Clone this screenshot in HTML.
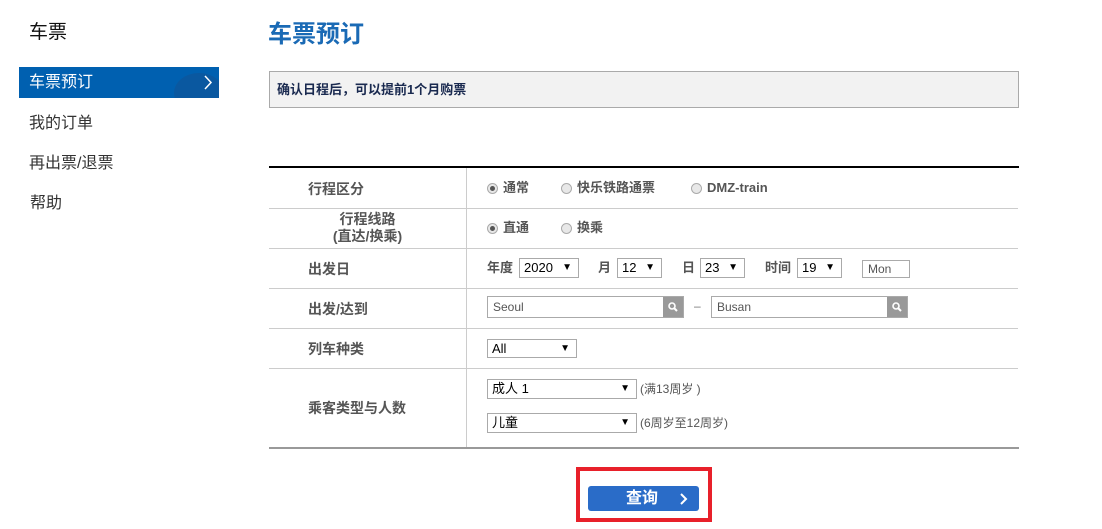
<!DOCTYPE html>
<html><head><meta charset="utf-8"><style>
*{margin:0;padding:0;box-sizing:border-box}
body{width:1102px;height:529px;background:#fff;font-family:"Liberation Sans","Noto Sans CJK SC",sans-serif;position:relative;overflow:hidden;line-height:1.2}
.a{position:absolute;white-space:nowrap}
.lbl{position:absolute;font-size:14px;color:#555;font-weight:bold;left:308px;line-height:16px}
.hl{position:absolute;left:269px;width:749px;height:1px;background:#ccc}
.sel{position:absolute;height:20px;border:1px solid #aaa;font-size:13px;color:#000;padding-left:4px;line-height:18px;background:#fff}
.sel:after{content:"▼";position:absolute;right:6px;top:0;font-size:10px}
.r{display:inline-block;width:11px;height:11px;border-radius:50%;border:1px solid #aaa;background:#e8e8e8;margin-right:5px;position:relative}
.r.on:after{content:"";position:absolute;left:2px;top:2px;width:5px;height:5px;border-radius:50%;background:#555}
.t{font-size:13px;color:#555;font-weight:bold;line-height:16px;display:flex;align-items:center}
.inp{position:absolute;height:22px;border:1px solid #aaa;font-size:12px;color:#555;padding-left:5px;line-height:20px}
.mag{position:absolute;right:0;top:0;width:20px;height:20px;background:#999}
</style></head><body>
<div class="a" style="left:29px;top:22px;font-size:19px;line-height:22px;color:#111">车票</div>
<div class="a" style="left:19px;top:67px;width:200px;height:31px;background:#0060b0;overflow:hidden">
<div style="position:absolute;left:155px;top:6px;width:50px;height:40px;border-radius:50%;background:#0a58a0"></div>
<div style="position:absolute;left:10px;top:7px;font-size:16px;line-height:18px;color:#fff">车票预订</div>
<svg style="position:absolute;left:184px;top:8px" width="10" height="15"><path d="M2 1L8 7.5L2 14" stroke="#fff" stroke-width="1.5" fill="none"/></svg>
</div>
<div class="a" style="left:29px;top:115px;font-size:16px;line-height:18px;color:#333">我的订单</div>
<div class="a" style="left:29px;top:155px;font-size:16px;line-height:18px;color:#333">再出票/退票</div>
<div class="a" style="left:30px;top:195px;font-size:16px;line-height:18px;color:#333">帮助</div>
<div class="a" style="left:268px;top:21px;font-size:24px;line-height:28px;font-weight:bold;color:#1a6ab5">车票预订</div>
<div class="a" style="left:269px;top:71px;width:750px;height:37px;background:#f2f2f2;border:1px solid #aaa;font-size:13px;line-height:16px;font-weight:bold;color:#1a2a50;padding:10px 0 0 7px">确认日程后，可以提前1个月购票</div>
<div class="a" style="left:269px;top:166px;width:750px;height:2px;background:#000"></div>
<div class="a" style="left:466px;top:168px;width:1px;height:280px;background:#ccc"></div>
<div class="hl" style="top:208px"></div><div class="hl" style="top:248px"></div><div class="hl" style="top:288px"></div><div class="hl" style="top:328px"></div><div class="hl" style="top:368px"></div>
<div class="a" style="left:269px;top:447px;width:750px;height:2px;background:#999"></div>
<div class="lbl" style="top:181px">行程区分</div>
<div class="lbl" style="top:211px;left:269px;width:197px;text-align:center;line-height:17px">行程线路<br>(直达/换乘)</div>
<div class="lbl" style="top:261px">出发日</div>
<div class="lbl" style="top:301px">出发/达到</div>
<div class="lbl" style="top:341px">列车种类</div>
<div class="lbl" style="top:400px">乘客类型与人数</div>
<div class="a t" style="left:487px;top:180px"><span class="r on"></span>通常</div>
<div class="a t" style="left:561px;top:180px"><span class="r"></span>快乐铁路通票</div>
<div class="a t" style="left:691px;top:180px"><span class="r"></span>DMZ-train</div>
<div class="a t" style="left:487px;top:220px"><span class="r on"></span>直通</div>
<div class="a t" style="left:561px;top:220px"><span class="r"></span>换乘</div>
<div class="a t" style="left:487px;top:260px">年度</div>
<div class="sel" style="left:519px;top:258px;width:60px">2020</div>
<div class="a t" style="left:598px;top:260px">月</div>
<div class="sel" style="left:617px;top:258px;width:45px">12</div>
<div class="a t" style="left:682px;top:260px">日</div>
<div class="sel" style="left:700px;top:258px;width:45px">23</div>
<div class="a t" style="left:765px;top:260px">时间</div>
<div class="sel" style="left:797px;top:258px;width:45px">19</div>
<div class="inp" style="left:862px;top:260px;width:48px;height:18px;line-height:16px">Mon</div>
<div class="inp" style="left:487px;top:296px;width:197px">Seoul<div class="mag"><svg width="20" height="20"><circle cx="9" cy="9" r="3" stroke="#fff" stroke-width="1.6" fill="none"/><path d="M11 11L14 14" stroke="#fff" stroke-width="2"/></svg></div></div>
<div class="a" style="left:694px;top:299px;font-size:12px;color:#777">–</div>
<div class="inp" style="left:711px;top:296px;width:197px">Busan<div class="mag"><svg width="20" height="20"><circle cx="9" cy="9" r="3" stroke="#fff" stroke-width="1.6" fill="none"/><path d="M11 11L14 14" stroke="#fff" stroke-width="2"/></svg></div></div>
<div class="sel" style="left:487px;top:339px;width:90px;height:19px">All</div>
<div class="sel" style="left:487px;top:379px;width:150px">成人 1</div>
<div class="a" style="left:640px;top:381px;font-size:12px;line-height:16px;color:#555">(满13周岁 )</div>
<div class="sel" style="left:487px;top:413px;width:150px">儿童</div>
<div class="a" style="left:640px;top:415px;font-size:12px;line-height:16px;color:#555">(6周岁至12周岁)</div>
<div class="a" style="left:576px;top:467px;width:136px;height:55px;border:4px solid #e8202a"></div>
<div class="a" style="left:588px;top:486px;width:111px;height:25px;background:#2a6cc8;border-radius:3px;color:#fff;font-size:16px;line-height:18px;font-weight:bold;padding:4px 0 0 38px">查询
<svg style="position:absolute;left:92px;top:7px" width="8" height="12"><path d="M1 1L6 6L1 11" stroke="#fff" stroke-width="2" fill="none"/></svg></div>
</body></html>
